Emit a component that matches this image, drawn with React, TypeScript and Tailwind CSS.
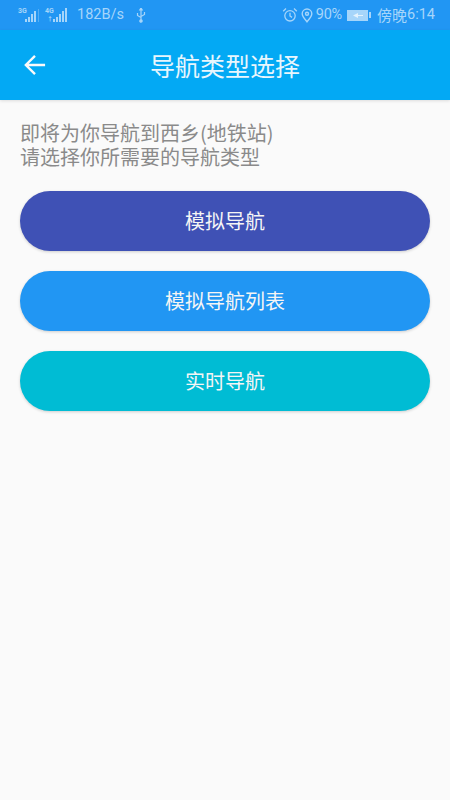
export default function App() {
  const cjk = { fontFamily: '"Noto Sans CJK SC", sans-serif' };
  const buttons: [string, string][] = [
    ["模拟导航", "bg-[#3f51b5]"],
    ["模拟导航列表", "bg-[#2196f3]"],
    ["实时导航", "bg-[#00bcd4]"],
  ];
  const Signal = ({ label, top, bars, w }: { label: string; top?: string; bars: number[]; w: string }) => (
    <div className={`flex items-end h-[14px] relative ${w}`}>
      <span className="absolute left-0 top-0 text-[7px] leading-[7px] font-bold">{label}</span>
      {top && <span className="absolute left-[2px] top-[7px] text-[6px] leading-[7px] font-bold">{top}</span>}
      <div className="ml-auto flex items-end gap-[1px]">
        {bars.map((h, i) => (
          <div key={i} className="w-[2px] bg-[#a6d5fa]" style={{ height: h }} />
        ))}
      </div>
    </div>
  );
  return (
    <div className="w-[450px] h-[800px] bg-[#fafafa] flex flex-col overflow-hidden" style={{ fontFamily: 'Roboto, "Noto Sans CJK SC", sans-serif' }}>
      <div className="h-[30px] bg-[#2196f3] text-[#a6d5fa] flex items-center justify-between pl-[18px] pr-[15px] shrink-0">
        <div className="flex items-center text-[14.5px]">
          <Signal label="3G" bars={[3, 5, 8, 11]} w="w-[18px]" />
          <div className="w-[1px] h-[13px] bg-[#55aef5] ml-[2px] mr-[6px]" />
          <Signal label="4G" top="↑" bars={[3, 5, 8, 11, 14]} w="w-[22px]" />
          <span className="ml-[10px]">182B/s</span>
          <svg className="ml-[11px]" width="12" height="15" viewBox="0 0 12 15" fill="none" stroke="currentColor" strokeWidth="1.2">
            <path d="M6 1v13M2.5 5v2.5L6 9.5M9.5 4v2.5L6 8.5" />
            <circle cx="6" cy="13" r="1.2" fill="currentColor" />
            <path d="M6 0L4.8 2h2.4z" fill="currentColor" />
          </svg>
        </div>
        <div className="flex items-center text-[14.5px]">
          <svg width="16" height="16" viewBox="0 0 16 16" fill="none" stroke="currentColor" strokeWidth="1.3">
            <circle cx="8" cy="8.8" r="5.2" />
            <path d="M8 5.8v3.2l2 1.4M1.2 4.2L4 1.6M14.8 4.2L12 1.6" />
          </svg>
          <svg className="ml-[3px]" width="12" height="15" viewBox="0 0 12 15" fill="none" stroke="currentColor" strokeWidth="1.4">
            <path d="M6 13.8C3.5 10.8 1.2 8.4 1.2 5.8a4.8 4.8 0 0 1 9.6 0c0 2.6-2.3 5-4.8 8z" />
            <circle cx="6" cy="5.8" r="1.5" />
          </svg>
          <span className="ml-[3px] tracking-[-0.2px]">90%</span>
          <div className="ml-[5px] flex items-center">
            <div className="w-[21px] h-[11px] bg-[#a6d5fa] flex items-center justify-center">
              <svg width="12" height="7" viewBox="0 0 12 7"><path d="M1 3.5L6 1v2h5v1H6v2z" fill="#e3f2fd" /></svg>
            </div>
            <div className="w-[2px] h-[6px] ml-[1px] bg-[#a6d5fa]" />
          </div>
          <span className="ml-[6px] text-[15px]" style={cjk}>傍晚</span>
          <span>6:14</span>
        </div>
      </div>
      <div className="h-[70px] bg-[#03a9f4] flex items-center relative shrink-0 shadow-[0_1px_3px_rgba(0,0,0,0.12)]">
        <svg className="absolute left-[24px] top-[24px]" width="22" height="22" viewBox="0 0 24 24" fill="none" stroke="#fafafa" strokeWidth="2.6">
          <path d="M23 12H2M12 2L2 12l10 10" />
        </svg>
        <div className="w-full text-center text-[25px] text-[#e8f6fd] leading-[32px]" style={cjk}>导航类型选择</div>
      </div>
      <div className="px-[20px] pt-[21px]">
        <div className="text-[20px] leading-[24px] text-[#8a8a8a]" style={cjk}>
          <div>即将为你导航到西乡(地铁站)</div>
          <div>请选择你所需要的导航类型</div>
        </div>
        <div className="mt-[22px] flex flex-col gap-[20px]">
          {buttons.map(([t, c]) => (
            <div key={t} className={`h-[60px] rounded-[30px] ${c} flex items-center justify-center text-[20px] text-[#f5f5f5] shadow-[0_1px_3px_rgba(0,0,0,0.18)]`} style={cjk}>
              {t}
            </div>
          ))}
        </div>
      </div>
    </div>
  );
}
